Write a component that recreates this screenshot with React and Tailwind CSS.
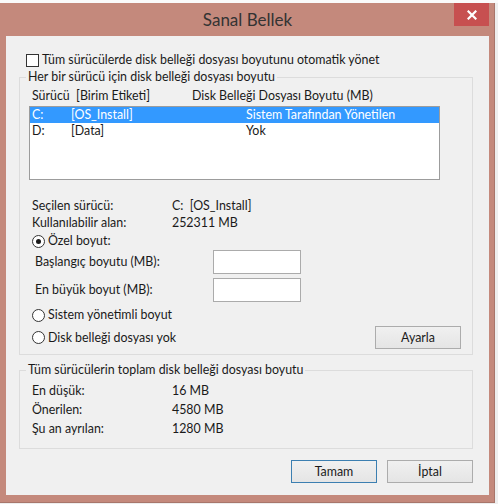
import React from "react";

function CheckBox() {
  return <span className="w-[13px] h-[13px] shrink-0 border border-[#333333] bg-white" />;
}

function Radio({ checked }) {
  return (
    <span className="w-[13px] h-[13px] shrink-0 rounded-full border border-[#333333] bg-white flex items-center justify-center">
      {checked && <span className="w-[5px] h-[5px] rounded-full bg-[#1a1a1a]" />}
    </span>
  );
}

function Button({ children, primary }) {
  return (
    <button
      className={`w-[86px] h-[23px] border bg-linear-to-b from-[#f0f0f0] to-[#e5e5e5] text-[12.4px] text-[#1a1a1a] ${
        primary ? "border-[#3c7fb1]" : "border-[#acacac]"
      }`}
    >
      {children}
    </button>
  );
}

function InfoRow({ label, value, h }) {
  return (
    <div className={`flex items-center pl-[12px] ${h}`}>
      <span className="w-[140px]">{label}</span>
      <span>{value}</span>
    </div>
  );
}

export default function App() {
  return (
    <div className="w-[498px] h-[504px] overflow-hidden bg-[#eeeeee] font-['Lato','Noto_Sans',sans-serif] text-[12.4px] leading-[16px] text-[#1a1a1a]">
      {/* background window edge */}
      <div className="h-[3px] bg-[#fafafa]" />

      <div className="relative w-[495px] h-[500px] flex flex-col bg-[#c4897c] border-r border-b border-[#a8766b] pl-[6px] pr-[5px] pb-[7px]">
        <div className="h-[33px] shrink-0 flex items-center justify-center text-[17px] text-[#333333]">
          Sanal Bellek
        </div>
        <button className="absolute top-0 right-[5px] w-[35px] h-[23px] bg-[#c75050] flex items-center justify-center">
          <svg width="10" height="10" viewBox="0 0 10 10">
            <path d="M1.5 1.5 L8.5 8.5 M8.5 1.5 L1.5 8.5" stroke="white" strokeWidth="2.2" strokeLinecap="square" />
          </svg>
        </button>

        {/* client area */}
        <div className="flex-1 flex flex-col bg-[#f0f0f0] pt-[16px]">
          <div className="h-[16px] flex items-center gap-[3px] pl-[20px]">
            <CheckBox />
            <span>Tüm sürücülerde disk belleği dosyası boyutunu otomatik yönet</span>
          </div>

          <fieldset className="mt-[1px] ml-[13px] w-[454px] border border-[#dcdcdc] pb-[5px]">
            <legend className="ml-[6px] px-[2px] leading-[16px]">Her bir sürücü için disk belleği dosyası boyutu</legend>

            <div className="mt-[3px] h-[16px] flex items-center pl-[12px]">
              <span className="w-[160px]">Sürücü&nbsp;&nbsp;[Birim Etiketi]</span>
              <span>Disk Belleği Dosyası Boyutu (MB)</span>
            </div>

            <div className="mt-[2px] ml-[9px] w-[411px] h-[74px] border border-[#9c9c9c] bg-white">
              <div className="h-[16px] flex items-center pl-[2px] bg-[#3399ff] text-white">
                <span className="w-[39px]">C:</span>
                <span className="w-[175px]">[OS_Install]</span>
                <span>Sistem Tarafından Yönetilen</span>
              </div>
              <div className="h-[16px] flex items-center pl-[2px]">
                <span className="w-[39px]">D:</span>
                <span className="w-[175px]">[Data]</span>
                <span>Yok</span>
              </div>
            </div>

            <div className="mt-[17px]">
              <InfoRow label="Seçilen sürücü:" value="C:  [OS_Install]" h="h-[17px] whitespace-pre" />
              <InfoRow label="Kullanılabilir alan:" value="252311 MB" h="h-[17px]" />
            </div>

            <div className="mt-[2px] h-[16px] flex items-center gap-[3px] pl-[12px]">
              <Radio checked />
              <span>Özel boyut:</span>
            </div>

            <div className="mt-[1px] h-[24px] flex items-center pl-[15px]">
              <span className="w-[178px]">Başlangıç boyutu (MB):</span>
              <div className="w-[88px] h-[24px] border border-[#ababab] bg-white" />
            </div>
            <div className="mt-[4px] h-[24px] flex items-center pl-[15px]">
              <span className="w-[178px]">En büyük boyut (MB):</span>
              <div className="w-[88px] h-[24px] border border-[#ababab] bg-white" />
            </div>

            <div className="mt-[5px] h-[16px] flex items-center gap-[3px] pl-[12px]">
              <Radio />
              <span>Sistem yönetimli boyut</span>
            </div>

            <div className="mt-[3px] h-[23px] flex items-center pl-[12px] pr-[11px]">
              <Radio />
              <span className="ml-[3px] flex-1">Disk belleği dosyası yok</span>
              <Button>Ayarla</Button>
            </div>
          </fieldset>

          <fieldset className="mt-[7px] ml-[13px] w-[454px] border border-[#dcdcdc] pb-[10px]">
            <legend className="ml-[6px] px-[2px] leading-[16px]">Tüm sürücülerin toplam disk belleği dosyası boyutu</legend>
            <div className="mt-[3px]">
              <InfoRow label="En düşük:" value="16 MB" h="h-[19px]" />
              <InfoRow label="Önerilen:" value="4580 MB" h="h-[19px]" />
              <InfoRow label="Şu an ayrılan:" value="1280 MB" h="h-[19px]" />
            </div>
          </fieldset>

          <div className="mt-[11px] flex justify-end gap-[10px] pr-[16px]">
            <Button primary>Tamam</Button>
            <Button>İptal</Button>
          </div>
        </div>
      </div>
    </div>
  );
}
